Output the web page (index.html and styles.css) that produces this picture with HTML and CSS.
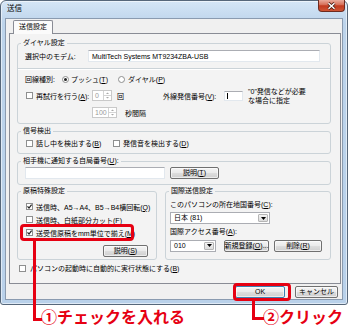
FILE: index.html
```html
<!DOCTYPE html>
<html lang="ja">
<head>
<meta charset="utf-8">
<title>送信</title>
<link rel="stylesheet" href="styles.css">
</head>
<body>
<div class="page">
  <div class="window">
    <div class="titlebar">
      <span class="title">送信</span>
      <span class="close"><svg width="11" height="8" viewBox="0 0 11 8"><path d="M2.5 1.2L8.5 6.8M8.5 1.2L2.5 6.8" stroke="#4a1c12" stroke-width="3"/><path d="M2.5 1.2L8.5 6.8M8.5 1.2L2.5 6.8" stroke="#fff" stroke-width="1.5"/></svg></span>
    </div>
    <div class="client">
      <div class="tabstrip"><span class="tab">送信設定</span></div>
      <div class="panel">
        <fieldset class="group">
          <legend>ダイヤル設定</legend>
          <div class="gbody b1">
            <div class="row r1">
              <span class="l-modem">選択中のモデム:</span>
              <span class="textbox modem">MultiTech Systems MT9234ZBA-USB</span>
            </div>
            <div class="sep"></div>
            <div class="row r2">
              <span class="l-line">回線種別:</span>
              <svg class="rb" width="7" height="7" viewBox="0 0 7 7"><circle cx="3.5" cy="3.5" r="3" fill="#fff" stroke="#8e8f8f"/><circle cx="3.5" cy="3.5" r="1.5" fill="#222"/></svg>
              <span class="opt o1">プッシュ(<u>T</u>)</span>
              <svg class="rb" width="7" height="7" viewBox="0 0 7 7"><circle cx="3.5" cy="3.5" r="3" fill="#fff" stroke="#8e8f8f"/></svg>
              <span class="opt o2">ダイヤル(<u>P</u>)</span>
            </div>
            <div class="row r3">
              <svg class="cb" width="7" height="7" viewBox="0 0 7 7"><rect x="0.5" y="0.5" width="6" height="6" fill="#fff" stroke="#8e8f8f"/></svg>
              <span class="ct l-retry">再試行を行う(<u>A</u>):</span>
              <span class="spin s1"><span class="val">0</span><span class="arrows"><svg width="7" height="9" viewBox="0 0 7 9"><path d="M0 4.5H7" stroke="#d4d4d4"/><path d="M2 3L3.5 1.5L5 3Z" fill="#a8a8a8"/><path d="M2 6L3.5 7.5L5 6Z" fill="#a8a8a8"/></svg></span></span>
              <span class="l-kai">回</span>
              <span class="l-ext">外線発信番号(<u>V</u>):</span>
              <span class="textbox ext"><span class="caret"></span></span>
              <span class="note">"0"発信などが必要<br>な場合に指定</span>
            </div>
            <div class="row r4">
              <span class="spin s2"><span class="val">100</span><span class="arrows"><svg width="7" height="9" viewBox="0 0 7 9"><path d="M0 4.5H7" stroke="#d4d4d4"/><path d="M2 3L3.5 1.5L5 3Z" fill="#a8a8a8"/><path d="M2 6L3.5 7.5L5 6Z" fill="#a8a8a8"/></svg></span></span>
              <span class="l-sec">秒間隔</span>
            </div>
          </div>
        </fieldset>

        <fieldset class="group g2">
          <legend>信号検出</legend>
          <div class="gbody b2">
            <div class="row">
              <svg class="cb" width="7" height="7" viewBox="0 0 7 7"><rect x="0.5" y="0.5" width="6" height="6" fill="#fff" stroke="#8e8f8f"/></svg>
              <span class="ct l-busy">話し中を検出する(<u>B</u>)</span>
              <svg class="cb cb2" width="7" height="7" viewBox="0 0 7 7"><rect x="0.5" y="0.5" width="6" height="6" fill="#fff" stroke="#8e8f8f"/></svg>
              <span class="ct">発信音を検出する(<u>D</u>)</span>
            </div>
          </div>
        </fieldset>

        <fieldset class="group g3">
          <legend>相手機に通知する自局番号(<u>U</u>):</legend>
          <div class="gbody b3">
            <div class="row r-own">
              <span class="textbox own"></span>
              <span class="btn b-help1">説明(<u>T</u>)</span>
            </div>
          </div>
        </fieldset>

        <div class="pair">
          <fieldset class="group gl">
            <legend>原稿特殊設定</legend>
            <div class="gbody bl">
              <div class="row rl">
                <svg class="cb" width="7" height="7" viewBox="0 0 7 7"><rect x="0.5" y="0.5" width="6" height="6" fill="#fff" stroke="#8e8f8f"/><path d="M1.5 3.4L3 5L5.6 1.6" fill="none" stroke="#222" stroke-width="1.2"/></svg>
                <span class="ct">送信時、A5→A4、B5→B4横回転(<u>Q</u>)</span>
              </div>
              <div class="row rl">
                <svg class="cb" width="7" height="7" viewBox="0 0 7 7"><rect x="0.5" y="0.5" width="6" height="6" fill="#fff" stroke="#8e8f8f"/></svg>
                <span class="ct">送信時、白紙部分カット(<u>F</u>)</span>
              </div>
              <div class="row rl">
                <svg class="cb" width="7" height="7" viewBox="0 0 7 7"><rect x="0.5" y="0.5" width="6" height="6" fill="#fff" stroke="#8e8f8f"/><path d="M1.5 3.4L3 5L5.6 1.6" fill="none" stroke="#222" stroke-width="1.2"/></svg>
                <span class="ct">送受信原稿をmm単位で揃え(<u>M</u>)</span>
              </div>
              <div class="row r-help2">
                <span class="btn b-help2">説明(<u>S</u>)</span>
              </div>
            </div>
          </fieldset>
          <fieldset class="group gr">
            <legend>国際送信設定</legend>
            <div class="gbody br">
              <div class="row rr-lbl">このパソコンの所在地国番号(<u>C</u>):</div>
              <div class="row rr-combo">
                <span class="combo c-country"><span class="val">日本 (81)</span><span class="dd"><svg width="5" height="3" viewBox="0 0 5 3"><path d="M0 0H5L2.5 3Z" fill="#000"/></svg></span></span>
              </div>
              <div class="row rr-lbl2">国際アクセス番号(<u>A</u>):</div>
              <div class="row rr-last">
                <span class="combo c-access"><span class="val">010</span><span class="dd"><svg width="5" height="3" viewBox="0 0 5 3"><path d="M0 0H5L2.5 3Z" fill="#000"/></svg></span></span>
                <span class="btn b-new">新規登録(<u>O</u>)...</span>
                <span class="btn b-del">削除(<u>R</u>)</span>
              </div>
            </div>
          </fieldset>
        </div>

        <div class="row r-auto">
          <svg class="cb" width="7" height="7" viewBox="0 0 7 7"><rect x="0.5" y="0.5" width="6" height="6" fill="#fff" stroke="#8e8f8f"/></svg>
          <span class="ct2">パソコンの起動時に自動的に実行状態にする(<u>B</u>)</span>
        </div>
      </div>
      <div class="dlgbtns">
        <span class="btn b-ok">OK</span>
        <span class="btn b-cancel">キャンセル</span>
      </div>
    </div>
  </div>

  <div class="hl hl1"></div>
  <div class="lead lead1"></div>
  <div class="callout c1">①チェックを入れる</div>
  <div class="hl hl2"></div>
  <div class="lead lead2"></div>
  <div class="callout c2">②クリック</div>
</div>
</body>
</html>
```

FILE: styles.css
```css
* { box-sizing: border-box; }
html, body { margin: 0; padding: 0; }
body {
  background: #fff;
  font-family: "Liberation Sans", "Noto Sans CJK JP", sans-serif;
  font-size: 7px;
  color: #000;
}
u { text-underline-offset: 1px; }
.page { position: relative; width: 350px; height: 326px; overflow: hidden; }

.window {
  width: 348px;
  height: 305px;
  border: 1px solid #56677a;
  border-radius: 6px 6px 3px 3px;
  background: linear-gradient(#d5e6f6, #bdd4eb 22px, #b9d1ea);
  padding: 0 4px 4px;
  box-shadow: inset 0 0 0 1px rgba(255, 255, 255, 0.55);
}
.titlebar {
  height: 17px;
  display: flex;
  align-items: flex-start;
  justify-content: space-between;
}
.title { padding-left: 2px; margin-top: 2px; line-height: 12px; font-size: 7.5px; }
.close {
  width: 27px;
  height: 12px;
  margin: -1px -2px 0 0;
  border: 1px solid #6e2b1f;
  border-top: none;
  border-radius: 0 0 4px 4px;
  background: linear-gradient(#e9ab9c, #d66d55 45%, #c23a1f 52%, #cf5535);
  display: flex;
  align-items: center;
  justify-content: center;
}

.client {
  height: 282px;
  border: 1px solid #8a9bb0;
  background: #f0f0f0;
  display: flex;
  flex-direction: column;
}
.tabstrip {
  display: flex;
  margin: 1px 0 -1px 7px;
  position: relative;
  z-index: 1;
}
.tab {
  height: 14px;
  padding: 0 5px;
  border: 1px solid #898c95;
  border-bottom: none;
  border-radius: 2px 2px 0 0;
  background: #fbfbfb;
  line-height: 12px;
}
.panel {
  height: 251px;
  margin: 0 1px 0 3px;
  border: 1px solid #898c95;
  background: #f3f3f3;
  padding: 4px 9px 0 7px;
  display: flex;
  flex-direction: column;
}

.group {
  margin: 0;
  padding: 0;
  min-width: 0;
  border: 1px solid #cbd3d8;
  border-radius: 3px;
}
.group legend {
  margin-left: 3px;
  padding: 0 2px;
  height: 10px;
  line-height: 10px;
}
.g2, .g3 { margin-top: 2px; }
.gbody { padding: 2px 8px 5px 7px; }
.b2 { padding-top: 1px; padding-bottom: 4px; }
.b3 { padding-top: 0; padding-bottom: 5px; }

.row { display: flex; align-items: center; white-space: nowrap; }
.r1 { height: 12px; }
.l-modem { width: 63px; }
.textbox {
  display: flex;
  align-items: center;
  background: #fff;
  border: 1px solid #e2e8ee;
  border-top-color: #abadb3;
}
.modem { width: 232px; height: 12px; padding-left: 3px; }

.sep {
  margin: 6px -8px 0 -7px;
  height: 2px;
  border-top: 1px solid #cbd3d8;
  border-bottom: 1px solid #fff;
}
.r2 { height: 12px; margin-top: 3px; }
.l-line { width: 37px; }
.o1 { margin-left: 2px; width: 47px; }
.o2 { margin-left: 3px; }

.r3 { height: 13px; margin-top: 4px; }
.cb { flex: none; margin-left: 1px; }
.ct { margin-left: 3px; }
.l-retry { width: 56px; }
.spin {
  display: flex;
  height: 11px;
  background: #fff;
  border: 1px solid #c9c9c9;
  color: #9a9a9a;
}
.spin .val { flex: 1; padding-left: 2px; line-height: 9px; }
.spin .arrows { width: 8px; border-left: 1px solid #d4d4d4; display: flex; align-items: center; }
.s1 { width: 20px; }
.l-kai { margin-left: 5px; width: 46px; }
.l-ext { width: 61px; }
.ext { width: 19px; height: 10px; padding-left: 2px; }
.caret { width: 1px; height: 6px; background: #000; }
.note { margin-left: 5px; line-height: 9px; }

.r4 { height: 11px; margin-top: 5px; }
.s2 { width: 25px; margin-left: 67px; }
.l-sec { margin-left: 8px; }

.b2 .row { height: 12px; }
.l-busy { width: 77px; }
.cb2 { margin-left: 0; }

.r-own { height: 13px; }
.own { width: 140px; height: 12px; }

.btn {
  display: flex;
  align-items: center;
  justify-content: center;
  height: 12px;
  border: 1px solid #707070;
  border-radius: 2px;
  background: linear-gradient(#f4f4f4, #ebebeb 45%, #dddddd 52%, #cfcfcf);
  box-shadow: inset 0 0 0 1px rgba(255, 255, 255, 0.6);
  line-height: 10px;
  white-space: nowrap;
}
.b-help1 { width: 49px; margin-left: 5px; }

.pair { display: flex; gap: 8px; margin-top: 1px; }
.gl { width: 140px; flex: none; }
.gr { width: 166px; flex: none; }
.bl { padding: 4px 8px 2px 7px; }
.rl { height: 13px; }
.r-help2 { justify-content: flex-end; margin-top: 6px; }
.b-help2 { width: 45px; }

.br { padding: 3px 6px 6px 4px; }
.rr-lbl { height: 10px; }
.rr-combo { margin-top: 3px; }
.rr-lbl2 { height: 10px; margin-top: 2px; }
.rr-last { height: 13px; margin-top: 3px; }
.combo {
  display: flex;
  height: 12px;
  background: #fff;
  border: 1px solid #abadb3;
}
.combo .val { flex: 1; padding-left: 3px; line-height: 10px; }
.combo .dd {
  width: 10px;
  margin: 1px;
  border: 1px solid #b5b5b5;
  border-radius: 1px;
  background: linear-gradient(#f4f4f4, #dcdcdc);
  display: flex;
  align-items: center;
  justify-content: center;
}
.c-country { width: 100px; }
.c-access { width: 46px; }
.b-new { width: 45px; margin-left: 8px; }
.b-del { width: 48px; margin-left: 5px; }

.r-auto { height: 12px; margin-top: 2px; }
.r-auto .cb { margin-left: 2px; }
.ct2 { margin-left: 4px; }

.dlgbtns {
  display: flex;
  justify-content: flex-end;
  gap: 10px;
  margin-top: 2px;
  padding-right: 4px;
}
.b-ok { width: 50px; border-color: #3c7fb1; }
.b-cancel { width: 43px; }

.hl {
  position: absolute;
  border: 3px solid #e60012;
  border-radius: 4px;
}
.hl1 { left: 20px; top: 224px; width: 114px; height: 17px; }
.hl2 { left: 233px; top: 283px; width: 58px; height: 18px; }
.lead {
  position: absolute;
  border-style: solid;
  border-color: #e60012;
  border-width: 0 0 3px 3px;
}
.lead1 { left: 33px; top: 241px; width: 9px; height: 80px; }
.lead2 { left: 252px; top: 301px; width: 12px; height: 19px; }
.callout {
  position: absolute;
  color: #e60012;
  font-family: "Noto Sans CJK JP", sans-serif;
  font-weight: 700;
  font-size: 16px;
  line-height: 15px;
  white-space: nowrap;
}
.c1 { left: 41px; top: 309px; }
.c2 { left: 263px; top: 309px; }
```
